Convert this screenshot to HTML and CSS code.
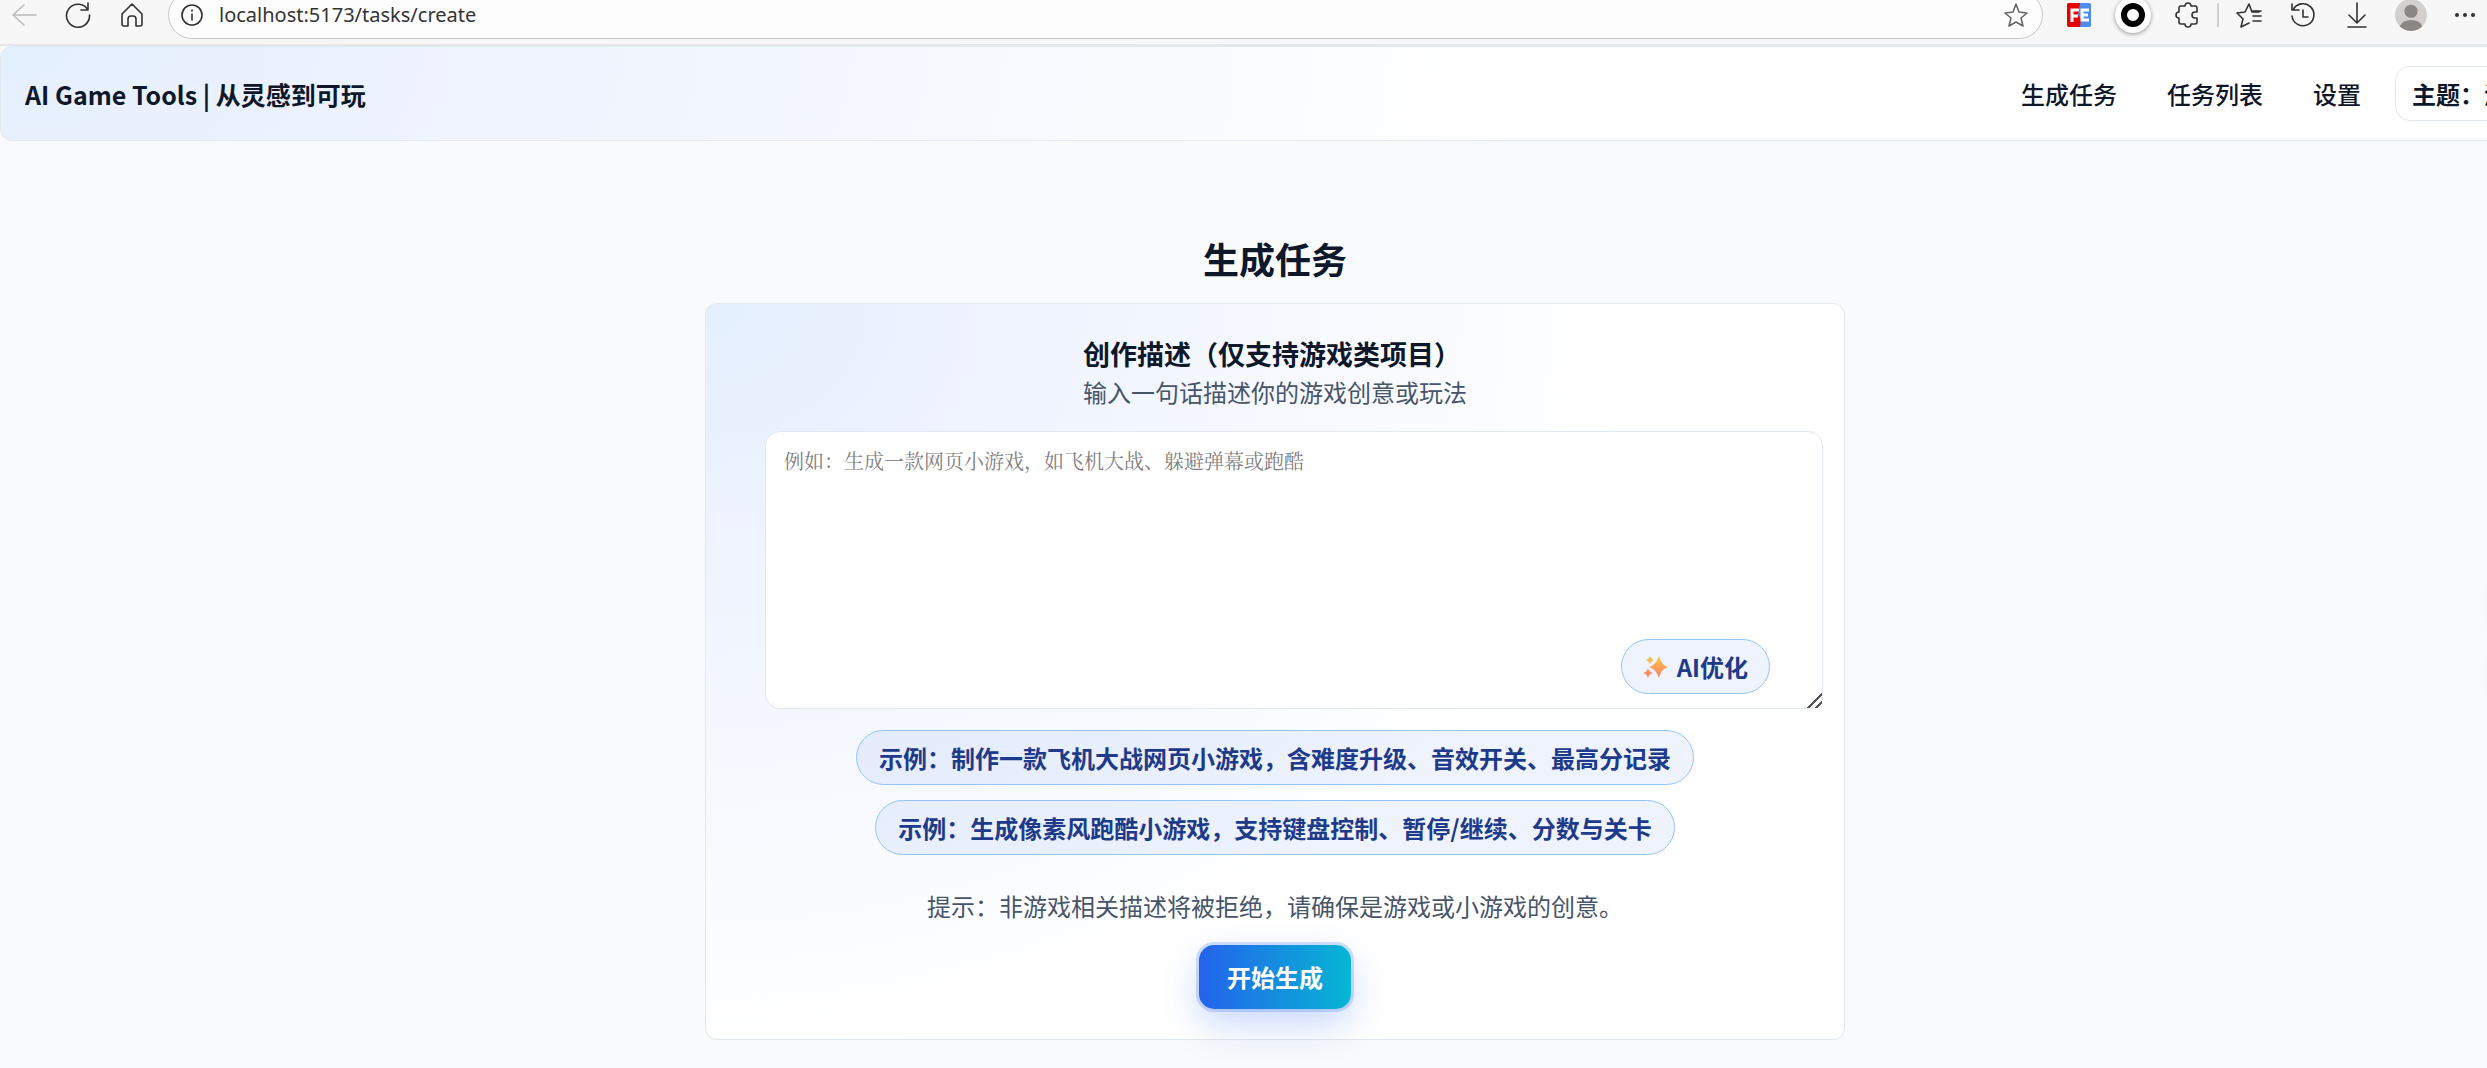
FILE: index.html
```html
<!DOCTYPE html>
<html lang="zh-CN">
<head>
  <meta charset="UTF-8" />
  <meta name="viewport" content="width=device-width, initial-scale=1.0"/>
  <title>AI Game Tools</title>
  <link rel="stylesheet" href="styles.css">
</head>
<body>
  <!-- barra del navegador -->
  <div class="browser">
    <button class="tool dim" aria-label="返回"><svg viewBox="0 0 26 26"><path d="M25 13H2M13 3L2 13l11 10"/></svg></button>
    <button class="tool" aria-label="刷新"><svg viewBox="0 0 26 26"><path d="M23 8A11.500 11.500 0 1 0 24.500 13M23 1v7h-7"/></svg></button>
    <button class="tool" aria-label="主页"><svg viewBox="0 0 26 26"><path d="M3 12L13 2l10 10v10a2 2 0 0 1-2 2h-4v-7a3 3 0 0 0-3-3h-2a3 3 0 0 0-3 3v7H5a2 2 0 0 1-2-2z"/></svg></button>
    <div class="address">
      <svg viewBox="0 0 26 26"><circle cx="13" cy="13" r="10"/><path d="M13 12v6M13 8v1"/></svg>
      <input type="text" class="url" aria-label="地址" value="localhost:5173/tasks/create">
      <button class="tool star" aria-label="收藏"><svg viewBox="0 0 26 26"><path d="M13 2l3 8 8 1-6 5 2 8-7-4-7 4 2-8-6-5 8-1z"/></svg></button>
    </div>
    <div class="tools">
      <button class="tool" aria-label="FE"><svg viewBox="0 0 26 26"><rect class="blue" x="1" y="1" width="24" height="24" rx="2"/><path class="red" d="M3 1h11l-2 12 3 4-1 8H3a2 2 0 0 1-2-2V3a2 2 0 0 1 2-2z"/><path class="fe" d="M6 20V8h7M6 14h6M23 8h-7v10h7M16 13h6"/></svg></button>
      <button class="tool ring" aria-label="扩展程序"><svg viewBox="0 0 26 26"><circle cx="13" cy="13" r="9"/></svg></button>
      <button class="tool" aria-label="扩展"><svg viewBox="0 0 26 26"><path d="M7 4h4a3 3 0 0 1 6 0h4a2 2 0 0 1 2 2v4h-2a3 3 0 0 0 0 6h2v4a2 2 0 0 1-2 2h-4a3 3 0 0 1-6 0H7a2 2 0 0 1-2-2v-4a3 3 0 0 1 0-6V6a2 2 0 0 1 2-2z"/></svg></button>
      <span class="divider"></span>
      <button class="tool" aria-label="收藏夹"><svg viewBox="0 0 26 26"><path d="M23 10h-7l-3-8-4 8-8 1 6 6-2 8 8-4M17 9h8M17 14h8M17 19h8"/></svg></button>
      <button class="tool" aria-label="历史记录"><svg viewBox="0 0 26 26"><path d="M2 2v6h7M3 8a11 11 0 1 1-1 6M13 8v7h5"/></svg></button>
      <button class="tool" aria-label="下载"><svg viewBox="0 0 26 26"><path d="M13 1v20M5 13l8 8 8-8M4 25h18"/></svg></button>
      <button class="tool avatar" aria-label="个人资料"><svg viewBox="0 0 34 34"><circle class="face" cx="17" cy="13" r="7"/><path class="face" d="M5 29a13 11 0 0 1 24 0 17 17 0 0 1-24 0z"/></svg></button>
      <button class="tool dots" aria-label="更多"><svg viewBox="0 0 26 26"><circle cx="5" cy="13" r="2"/><circle cx="13" cy="13" r="2"/><circle cx="21" cy="13" r="2"/></svg></button>
    </div>
  </div>

  <div class="page">
    <header class="topbar">
      <div class="logo">AI Game Tools | 从灵感到可玩</div>
      <nav>
        <a href="#create">生成任务</a>
        <a href="#list">任务列表</a>
        <a href="#settings">设置</a>
        <button class="theme">主题：浅色</button>
      </nav>
    </header>

    <main>
      <h1>生成任务</h1>
      <form class="card">
        <label class="field" for="desc">
          <strong>创作描述（仅支持游戏类项目）</strong>
          <span>输入一句话描述你的游戏创意或玩法</span>
        </label>
        <div class="editor">
          <textarea id="desc" placeholder="例如：生成一款网页小游戏，如飞机大战、躲避弹幕或跑酷"></textarea>
          <button type="button" class="chip optimize">
            <svg viewBox="0 0 26 26">
              <defs><linearGradient id="spark" x1="0" y1="0" x2="0" y2="1"><stop offset="0" stop-color="#fbc93d"/><stop offset="1" stop-color="#fb7e6e"/></linearGradient></defs>
              <path d="M16 2q2 9 9 11-7 2-9 11-3-9-10-11 7-2 10-11zM7 2q1 3 4 4-3 1-4 4-1-3-4-4 3-1 4-4zM5 14q1 4 5 5-4 1-5 5-1-4-5-5 4-1 5-5z"/>
            </svg>
            AI优化
          </button>
        </div>
        <div class="examples">
          <button type="button" class="chip">示例：制作一款飞机大战网页小游戏，含难度升级、音效开关、最高分记录</button>
          <button type="button" class="chip">示例：生成像素风跑酷小游戏，支持键盘控制、暂停/继续、分数与关卡</button>
        </div>
        <p class="hint">提示：非游戏相关描述将被拒绝，请确保是游戏或小游戏的创意。</p>
        <button type="button" class="submit">开始生成</button>
      </form>
    </main>
    <div class="float">
      <span></span>
      <span></span>
    </div>
  </div>
</body>
</html>
```

FILE: styles.css
```css
* { box-sizing:border-box;}
body { margin:0; min-height:100vh; overflow-x:hidden; background:#f8fafc; color:#0f172a; font-family:"Noto Sans CJK SC", sans-serif; font-size:24px; line-height:36px;}
button { font:inherit; color:inherit; cursor:pointer;}

.browser { display:flex; align-items:center; height:46px; padding:0 6px 14px 8px; gap:22px; background:#f7f7f7; border-bottom:2px solid #e6e6ec; overflow:hidden;}
.tool { flex:none; display:flex; align-items:center; justify-content:center; width:32px; height:32px; padding:0; border:0; background:none;}
.browser svg { flex:none; width:26px; height:26px; fill:none; stroke:#333; stroke-width:1.6; stroke-linecap:round; stroke-linejoin:round;}
.browser .dim svg { stroke:#bbb;}
.address { flex:1; display:flex; align-items:center; gap:14px; height:48px; margin-left:-2px; padding:0 10px; background:#fdfdfd; border:1px solid #c8c8c8; border-radius:24px;}
.url { flex:1; border:0; background:none; padding:0; color:#333; font:20px/28px "Noto Sans", sans-serif;}
.star svg { stroke:#666;}
.tools { display:flex; align-items:center; gap:22px; margin-left:-2px;}
.browser .blue { fill:#4a8cf0; stroke:none;}
.browser .red { fill:#e60000; stroke:none;}
.browser .fe { stroke:#fff; stroke-width:3; stroke-linecap:butt; stroke-linejoin:miter;}
.ring { width:36px; height:36px; margin:0 -2px; border-radius:50%; background:#fff; box-shadow:0 1px 4px rgba(0,0,0,.4);}
.browser .ring svg { stroke:#000; stroke-width:6;}
.divider { width:2px; height:24px; margin:0 -8px; background:#d0d0d0;}
.avatar { border-radius:50%; background:#d2d0ce;}
.browser .avatar svg { width:32px; height:32px;}
.browser .face { fill:#8a8684; stroke:none;}
.browser .dots svg { fill:#333; stroke:none;}

/* la página es un poco más ancha que la ventana */
.page { position:relative; width:calc(100% + 63px);}
.topbar { display:flex; align-items:center; justify-content:space-between; height:95px; padding-left:24px; border:1px solid #e2e8f0; border-radius:12px; background:radial-gradient(1800px 900px at 0 0, #e4f0fe 0, #ebf1fe 16%, #fff 84%);}
.logo { font-size:25px; font-weight:700;}
nav { display:flex; align-items:center; gap:18px;}
nav a { padding:0 16px; color:#0f172a; font-weight:500; text-decoration:none;}
.theme { height:55px; padding:0 16px; border:1px solid #e2e8f0; border-radius:15px; background:#fff; font-weight:700;}

main { display:flex; flex-direction:column; align-items:center; padding:90px 24px 28px;}
h1 { margin:0 0 18px; font-size:36px; line-height:54px; font-weight:700;}
.card { display:flex; flex-direction:column; align-items:center; width:100%; max-width:1140px; padding:30px 59px; border:1px solid #e2e8f0; border-radius:12px; background:radial-gradient(1100px 900px at 0 0, #e4f0fe 0, #ebf1fe 16%, #fff 84%);}
.field { display:flex; flex-direction:column;}
.field strong { font-size:27px; line-height:40px;}
.field span { color:#475569;}
.editor { position:relative; align-self:stretch; display:flex; margin:21px -38px 21px 0;}
textarea { width:100%; height:278px; padding:16px 18px; border:1px solid #e2e8f0; border-radius:15px; background:#fff; font:20px/28px "Liberation Serif", "Noto Serif CJK SC", serif; resize:vertical;}
textarea::placeholder { color:#808080;}
textarea::-webkit-resizer { background:linear-gradient(135deg, transparent 50%, #555 50%, #555 58%, transparent 58%, transparent 76%, #555 76%, #555 84%, transparent 84%);}
.chip { height:55px; padding:0 22px; border:1px solid #93c5fd; border-radius:28px; background:rgba(37,99,235,.08); color:#1e3a8a; font-weight:700;}
.optimize { position:absolute; right:53px; bottom:15px; display:flex; align-items:center; gap:8px; padding:0 21px;}
.optimize svg { width:26px; height:26px; fill:url(#spark);}
.examples { display:flex; flex-direction:column; align-items:center; gap:15px;}
.hint { margin:33px 0 21px; color:#475569;}
.submit { height:64px; padding:0 28px; border:0; border-radius:15px; background:linear-gradient(90deg,#2563eb,#06b6d4); color:#fff; font-weight:700; box-shadow:0 0 0 3px rgba(37,99,235,.2), 0 15px 36px rgba(37,99,235,.25);}

.float { position:absolute; top:528px; right:0; display:flex; flex-direction:column; gap:15px;}
.float span { width:57px; height:56px; border-radius:28px; box-shadow:0 4px 18px rgba(15,23,42,.1);}
```
